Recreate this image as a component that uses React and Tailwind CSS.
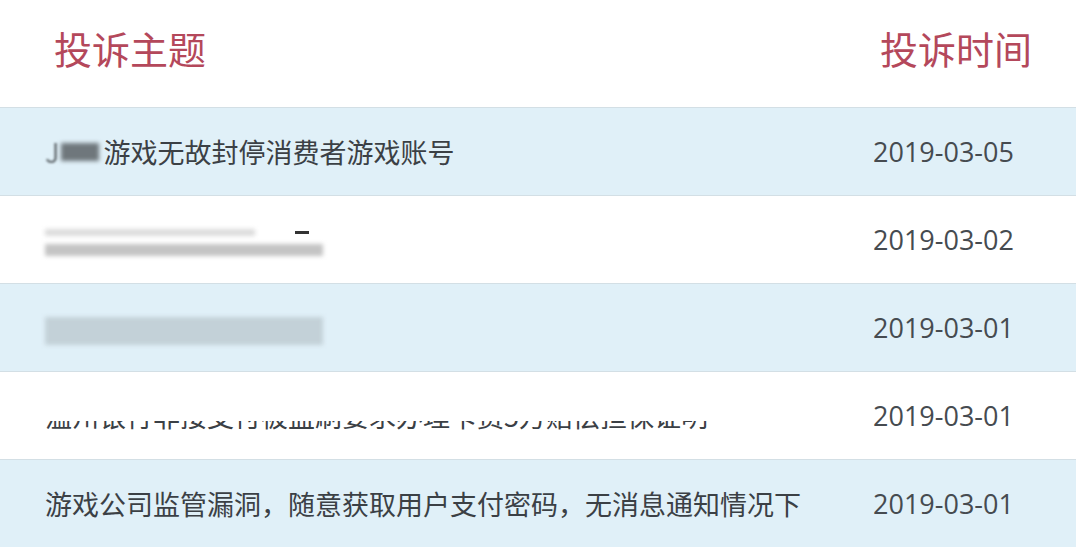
import React from 'react';

const cn = '"Noto Sans CJK SC", "Microsoft YaHei", sans-serif';

const rows = [
  { date: '2019-03-05', kind: 'prefix', text: '游戏无故封停消费者游戏账号' },
  { date: '2019-03-02', kind: 'blur2' },
  { date: '2019-03-01', kind: 'block' },
  { date: '2019-03-01', kind: 'cut', text: '温州银行非接支付被盗刷要求办理卡费5万赔偿担保证明' },
  { date: '2019-03-01', kind: 'plain', text: '游戏公司监管漏洞，随意获取用户支付密码，无消息通知情况下' },
];

const Subject = ({ row }) => {
  if (row.kind === 'prefix') {
    return (
      <div className="flex items-center">
        <span className="text-[#6b7378] blur-[1px]">J</span>
        <span className="inline-block w-[38px] h-[18px] bg-[#6f777c] blur-[2px] ml-[2px] mr-[4px]" />
        <span>{row.text}</span>
      </div>
    );
  }
  if (row.kind === 'blur2') {
    return (
      <div className="flex flex-col gap-[8px] pt-[6px]">
        <div className="flex items-center gap-[40px]">
          <div className="w-[210px] h-[7px] bg-[#dcdcdc] blur-[2px]" />
          <div className="w-[14px] h-[3px] bg-[#333] blur-[0.5px]" />
        </div>
        <div className="w-[278px] h-[12px] bg-[#c4c4c4] blur-[2px]" />
      </div>
    );
  }
  if (row.kind === 'block') {
    return <div className="w-[278px] h-[28px] bg-[#c3d1d8] blur-[2px] mt-[6px]" />;
  }
  if (row.kind === 'cut') {
    return (
      <div className="h-[13px] overflow-hidden mt-[24px]">
        <div className="-mt-[19px] whitespace-nowrap text-[#3b4045]">{row.text}</div>
      </div>
    );
  }
  return <div className="whitespace-nowrap">{row.text}</div>;
};

export default function App() {
  return (
    <div className="w-[1090px] h-[554px] bg-white overflow-hidden">
      <div className="w-[1076px]">
        <div
          className="h-[107px] flex items-center text-[#b4485b] text-[38px] leading-none"
          style={{ fontFamily: cn }}
        >
          <div className="flex-1 pl-[54px] pb-[12px]">投诉主题</div>
          <div className="w-[196px] pb-[12px]">投诉时间</div>
        </div>
        {rows.map((row, i) => (
          <div
            key={i}
            className={`h-[88px] flex items-center border-t border-[#d3dfe5] ${i % 2 === 0 ? 'bg-[#e0f0f8]' : 'bg-white'}`}
          >
            <div
              className="flex-1 pl-[45px] text-[27px] leading-none text-[#3b4045]"
              style={{ fontFamily: cn }}
            >
              <Subject row={row} />
            </div>
            <div className="w-[203px] text-[27px] leading-none text-[#464b50] font-['Open_Sans',sans-serif]">
              {row.date}
            </div>
          </div>
        ))}
      </div>
    </div>
  );
}
